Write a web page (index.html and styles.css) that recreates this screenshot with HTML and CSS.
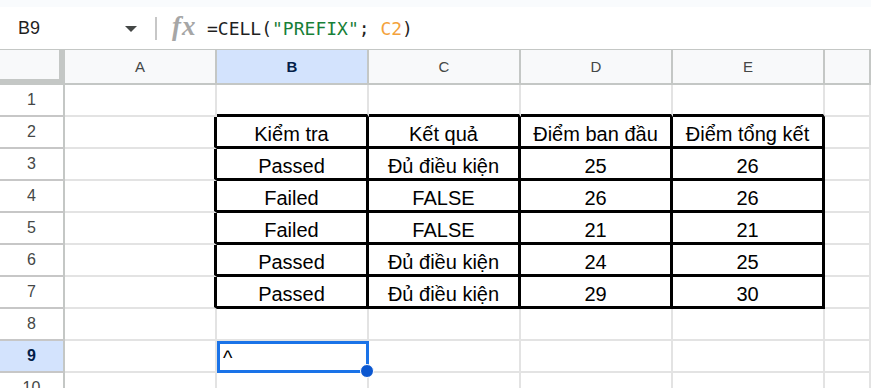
FILE: index.html
```html
<!DOCTYPE html>
<html lang="vi">
<head>
  <meta charset="UTF-8" />
  <title>Sheet</title>
  <link rel="stylesheet" href="styles.css">
</head>
<body>
  <div class="topstrip"></div>

  <div class="formula-bar">
    <div class="namebox">
      <span>B9</span>
      <span class="caret"></span>
    </div>
    <div class="sep"></div>
    <div class="fx">fx</div>
    <div class="formula">=CELL(<span class="str">"PREFIX"</span>; <span class="ref">C2</span>)</div>
  </div>

  <div class="sheet">
    <div class="row head">
      <div class="corner"></div>
      <div class="colhead">A</div>
      <div class="colhead active">B</div>
      <div class="colhead">C</div>
      <div class="colhead">D</div>
      <div class="colhead">E</div>
      <div class="colhead"></div>
    </div>

    <div class="row">
      <div class="rowhead">1</div>
      <div class="cell"></div>
      <div class="cell tt"></div>
      <div class="cell tt"></div>
      <div class="cell tt"></div>
      <div class="cell tt"></div>
      <div class="cell"></div>
    </div>

    <div class="row">
      <div class="rowhead">2</div>
      <div class="cell tl"></div>
      <div class="cell t">Kiểm tra</div>
      <div class="cell t">Kết quả</div>
      <div class="cell t">Điểm ban đầu</div>
      <div class="cell t">Điểm tổng kết</div>
      <div class="cell"></div>
    </div>

    <div class="row">
      <div class="rowhead">3</div>
      <div class="cell tl"></div>
      <div class="cell t">Passed</div>
      <div class="cell t">Đủ điều kiện</div>
      <div class="cell t">25</div>
      <div class="cell t">26</div>
      <div class="cell"></div>
    </div>

    <div class="row">
      <div class="rowhead">4</div>
      <div class="cell tl"></div>
      <div class="cell t">Failed</div>
      <div class="cell t">FALSE</div>
      <div class="cell t">26</div>
      <div class="cell t">26</div>
      <div class="cell"></div>
    </div>

    <div class="row">
      <div class="rowhead">5</div>
      <div class="cell tl"></div>
      <div class="cell t">Failed</div>
      <div class="cell t">FALSE</div>
      <div class="cell t">21</div>
      <div class="cell t">21</div>
      <div class="cell"></div>
    </div>

    <div class="row">
      <div class="rowhead">6</div>
      <div class="cell tl"></div>
      <div class="cell t">Passed</div>
      <div class="cell t">Đủ điều kiện</div>
      <div class="cell t">24</div>
      <div class="cell t">25</div>
      <div class="cell"></div>
    </div>

    <div class="row">
      <div class="rowhead">7</div>
      <div class="cell tl"></div>
      <div class="cell t">Passed</div>
      <div class="cell t">Đủ điều kiện</div>
      <div class="cell t">29</div>
      <div class="cell t">30</div>
      <div class="cell"></div>
    </div>

    <div class="row">
      <div class="rowhead">8</div>
      <div class="cell"></div>
      <div class="cell"></div>
      <div class="cell"></div>
      <div class="cell"></div>
      <div class="cell"></div>
      <div class="cell"></div>
    </div>

    <div class="row">
      <div class="rowhead active">9</div>
      <div class="cell"></div>
      <div class="cell selected">^<span class="handle"></span></div>
      <div class="cell"></div>
      <div class="cell"></div>
      <div class="cell"></div>
      <div class="cell"></div>
    </div>

    <div class="row">
      <div class="rowhead">10</div>
      <div class="cell"></div>
      <div class="cell"></div>
      <div class="cell"></div>
      <div class="cell"></div>
      <div class="cell"></div>
      <div class="cell"></div>
    </div>
  </div>
</body>
</html>
```

FILE: styles.css
```css
html, body {
  margin: 0;
  height: 100%;
  overflow: hidden;
}

body {
  font-family: "Liberation Sans", Arial, sans-serif;
  background: #ffffff;
  color: #000;
}

.topstrip {
  height: 7px;
  background: #f9fbfd;
}

/* formula bar */
.formula-bar {
  display: flex;
  align-items: center;
  height: 42px;
  border-bottom: 1px solid #c4c7c5;
}

.namebox {
  width: 155px;
  box-sizing: border-box;
  padding: 0 18px;
  display: flex;
  align-items: center;
  justify-content: space-between;
  font-size: 18px;
  color: #1f1f1f;
}

.caret {
  width: 0;
  height: 0;
  border-left: 6px solid transparent;
  border-right: 6px solid transparent;
  border-top: 6px solid #444746;
  margin-top: 2px;
}

.sep {
  width: 2px;
  height: 23px;
  background: #c7c7c7;
}

.fx {
  margin-left: 15px;
  width: 26px;
  font-family: "Liberation Serif", serif;
  font-style: italic;
  font-weight: bold;
  font-size: 27px;
  letter-spacing: 1px;
  color: #a6a6a6;
  line-height: 1;
  margin-top: -3px;
}

.formula {
  margin-left: 9px;
  font-family: "DejaVu Sans Mono", monospace;
  font-size: 18px;
  color: #1f1f1f;
}

.formula .str {
  color: #188038;
}

.formula .ref {
  color: #f4a23b;
}

/* grid */
.row {
  display: grid;
  grid-template-columns: 65px repeat(5, 152px) 1fr;
  height: 32px;
}

.row.head {
  height: 35px;
}

.row > div {
  box-sizing: border-box;
}

.corner {
  background: #f8f9fa;
  border-right: 6px solid #c4c7c5;
  border-bottom: 6px solid #c4c7c5;
}

.colhead {
  background: #f8f9fa;
  border-right: 2px solid #c4c7c5;
  border-bottom: 2px solid #c4c7c5;
  display: flex;
  align-items: center;
  justify-content: center;
  font-size: 15px;
  color: #444746;
}

.colhead.active,
.rowhead.active {
  background: #d3e3fd;
  color: #041e49;
  font-weight: bold;
}

.rowhead {
  border-right: 2px solid #c4c7c5;
  border-bottom: 2px solid #c7c7c7;
  display: flex;
  align-items: center;
  justify-content: center;
  font-size: 16px;
  color: #444746;
}

.cell {
  position: relative;
  border-right: 2px solid #e3e3e3;
  border-bottom: 2px solid #e3e3e3;
  display: flex;
  align-items: flex-end;
  justify-content: center;
  padding-bottom: 1px;
  font-size: 20px;
  white-space: nowrap;
}

/* black table borders */
.cell.t {
  border-right: 3px solid #000;
  border-bottom: 3px solid #000;
  padding-bottom: 0;
}

.cell.tl {
  border-right: 3px solid #000;
}

.cell.tt {
  border-bottom: 3px solid #000;
}

.cell.selected {
  z-index: 2;
  border: 3px solid #1a73e8;
  justify-content: flex-start;
  padding-left: 3px;
  padding-bottom: 0;
}

.handle {
  position: absolute;
  right: -8px;
  bottom: -8px;
  width: 12px;
  height: 12px;
  border-radius: 50%;
  background: #0b57d0;
  border: 1px solid #ffffff;
}
```
